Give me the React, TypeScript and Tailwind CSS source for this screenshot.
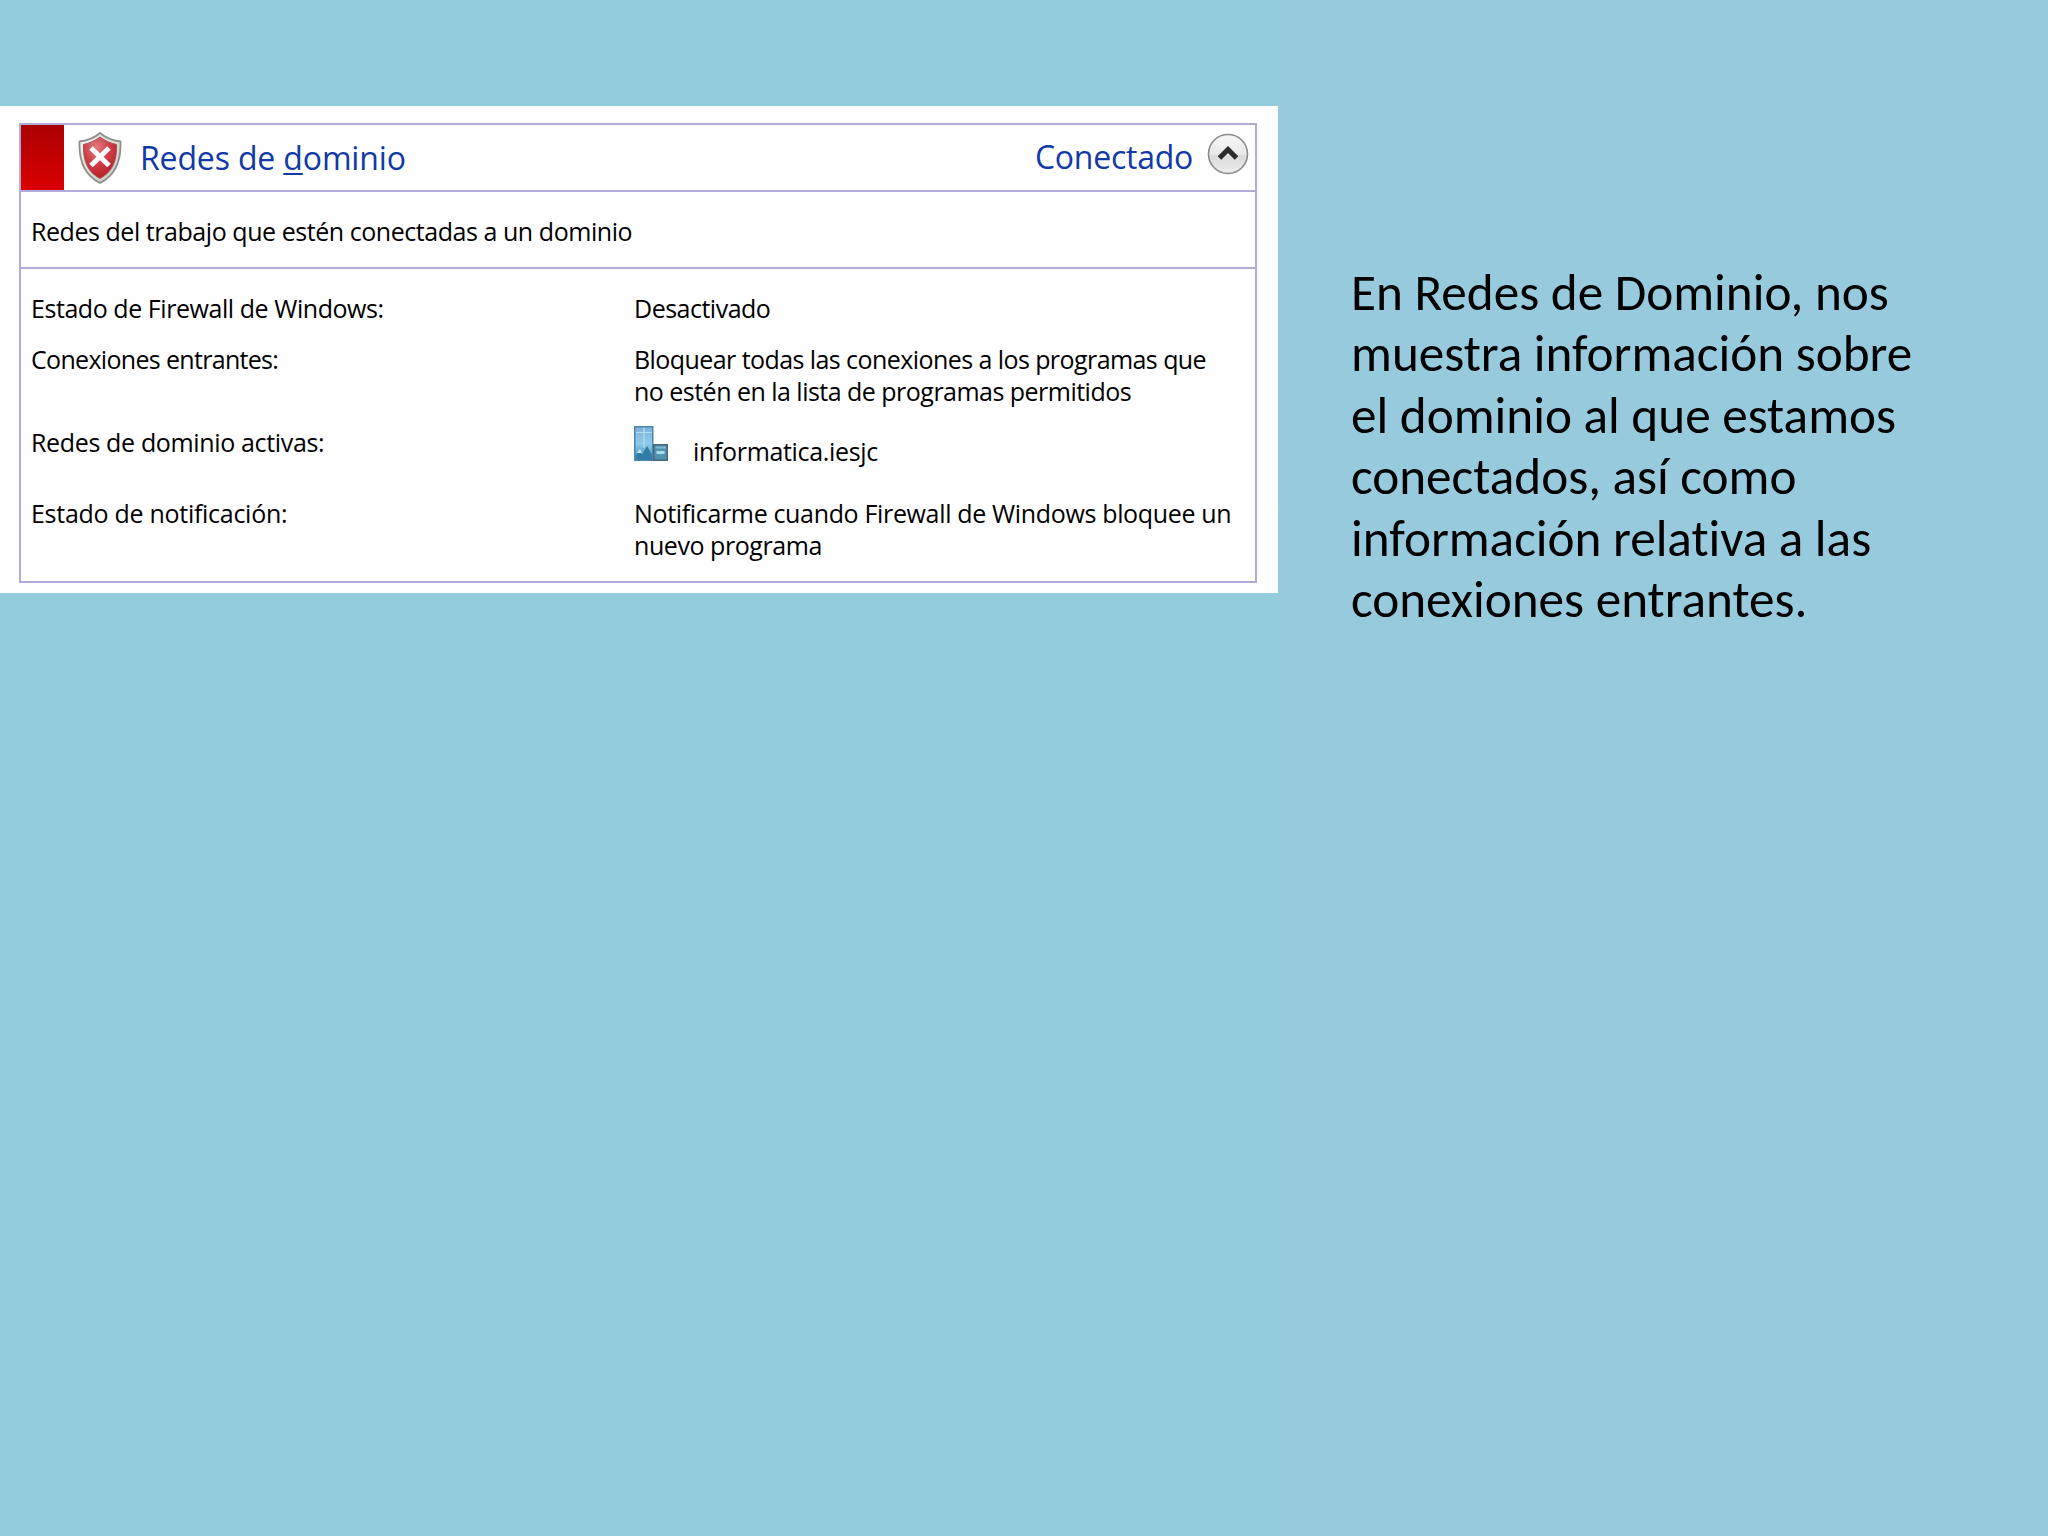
import type { ReactNode } from "react";

function ShieldIcon() {
  return (
    <svg viewBox="0 0 44 52" className="h-[52px] w-[44px]">
      <defs>
        <radialGradient id="shieldFill" cx="0.4" cy="0.25" r="0.85">
          <stop offset="0" stopColor="#e27a80" />
          <stop offset="0.45" stopColor="#cf4048" />
          <stop offset="1" stopColor="#b3141f" />
        </radialGradient>
        <linearGradient id="shieldRim" x1="0" y1="0" x2="1" y2="1">
          <stop offset="0" stopColor="#f6f6f2" />
          <stop offset="1" stopColor="#c4c4be" />
        </linearGradient>
      </defs>
      <path
        d="M22 1C17 5.500 9 8.500 1.500 9.500C0.800 27 5 42.500 22 51C39 42.500 43.200 27 42.500 9.500C35 8.500 27 5.500 22 1Z"
        fill="url(#shieldRim)"
        stroke="#8f8f8b"
        strokeWidth="1.800"
      />
      <path
        d="M22 5C17.500 8.500 11 11.500 5.500 12.500C5 27 8.500 39.500 22 46.500C35.500 39.500 39 27 38.500 12.500C33 11.500 26.500 8.500 22 5Z"
        fill="url(#shieldFill)"
        stroke="#a5525a"
        strokeWidth="1"
      />
      <path d="M13 16L31 33.500M31 16L13 33.500" stroke="#fff" strokeWidth="5" />
    </svg>
  );
}

function CollapseIcon() {
  return (
    <svg viewBox="0 0 42 42" className="h-[42px] w-[42px]">
      <defs>
        <linearGradient id="knob" x1="0" y1="0" x2="0" y2="1">
          <stop offset="0" stopColor="#f8f8f8" />
          <stop offset="0.5" stopColor="#e8e8e8" />
          <stop offset="0.55" stopColor="#dadada" />
          <stop offset="1" stopColor="#eeeeee" />
        </linearGradient>
      </defs>
      <circle cx="21" cy="21" r="19.500" fill="url(#knob)" stroke="#8a8a8a" strokeWidth="1.600" />
      <path d="M12.500 25L21 16.500L29.500 25" fill="none" stroke="#2b2b2b" strokeWidth="5" />
    </svg>
  );
}

function BuildingIcon() {
  return (
    <svg viewBox="0 0 34 35" className="h-[35px] w-[34px]">
      <defs>
        <linearGradient id="tower" x1="0" y1="0" x2="0" y2="1">
          <stop offset="0" stopColor="#7fb0d2" />
          <stop offset="0.5" stopColor="#8ccbec" />
          <stop offset="1" stopColor="#3d86ad" />
        </linearGradient>
      </defs>
      <rect x="0.750" y="0.750" width="18" height="33.500" fill="url(#tower)" stroke="#4a86ad" strokeWidth="1.500" />
      <path d="M2 6.500H18M10 1.500V22" stroke="#b4e0f5" strokeWidth="1.200" />
      <path d="M2 29L6 25L8 29L13 20L18 29V33.500H2Z" fill="#2f7da6" />
      <path d="M3 27L6 23L8 27Z" fill="#c4ecf8" />
      <rect x="19.750" y="18.750" width="13.500" height="15.500" fill="#4f93b3" stroke="#4a6678" strokeWidth="1.500" />
      <path d="M21.500 21.500H32" stroke="#7fb4cc" strokeWidth="2" />
      <rect x="22.500" y="25" width="8" height="3" fill="#a5dcec" />
    </svg>
  );
}

type RowProps = { label: string; labelClass: string; className?: string; children: ReactNode };

function Row({ label, labelClass, className = "", children }: RowProps) {
  return (
    <div className={`flex ${className}`}>
      <div className={`w-[603px] shrink-0 ${labelClass}`}>{label}</div>
      <div>{children}</div>
    </div>
  );
}

function FirewallPanel() {
  return (
    <section className="h-[487px] w-[1278px] shrink-0 bg-[#fefefe] pt-[17px] pl-[19px] font-['Open_Sans','Noto_Sans',sans-serif] whitespace-nowrap text-black">
      <div className="h-[460px] w-[1238px] border-2 border-[#b0abdb]">
        <header className="flex h-[67px] border-b-2 border-[#b0abdb] text-[32px] leading-[44px] text-[#1239a6]">
          <div className="w-[43px] bg-linear-to-b from-[#ab0000] to-[#dc0000]" />
          <div className="pt-[7px] pl-[14px]">
            <ShieldIcon />
          </div>
          <h1 className="pt-[11px] pl-[18px] tracking-[-0.150px]">
            Redes de <span className="underline decoration-2 underline-offset-[3px]">d</span>ominio
          </h1>
          <div className="ml-auto pt-[10px] tracking-[-0.250px]">Conectado</div>
          <div className="pt-[8px] pr-[6px] pl-[14px]">
            <CollapseIcon />
          </div>
        </header>

        <p className="h-[77px] border-b-2 border-[#b0abdb] pt-[23px] pl-[10px] text-[25px] leading-[32px] tracking-[-0.450px]">
          Redes del trabajo que estén conectadas a un dominio
        </p>

        <div className="flex flex-col gap-[19px] pt-[23px] pl-[10px] text-[25px] leading-[32px]">
          <Row label="Estado de Firewall de Windows:" labelClass="tracking-[-0.440px]">
            <p className="tracking-[-0.500px]">Desactivado</p>
          </Row>
          <Row label="Conexiones entrantes:" labelClass="tracking-[-0.680px]">
            <p className="tracking-[-0.570px]">Bloquear todas las conexiones a los programas que</p>
            <p className="tracking-[-0.520px]">no estén en la lista de programas permitidos</p>
          </Row>
          <Row label="Redes de dominio activas:" labelClass="tracking-[-0.350px]" className="h-[52px]">
            <div className="flex">
              <BuildingIcon />
              <p className="pt-[9px] pl-[25px] tracking-[-0.330px]">informatica.iesjc</p>
            </div>
          </Row>
          <Row label="Estado de notificación:" labelClass="tracking-[-0.280px]">
            <p className="tracking-[-0.340px]">Notificarme cuando Firewall de Windows bloquee un</p>
            <p className="tracking-[-0.440px]">nuevo programa</p>
          </Row>
        </div>
      </div>
    </section>
  );
}

export default function App() {
  return (
    <main className="flex h-[1536px] w-[2048px] items-start overflow-hidden bg-linear-to-r from-[#93cddd] from-62% to-[#97cadd] to-64% pt-[106px]">
      <FirewallPanel />
      <p className="pt-[156px] pl-[73px] font-['Carlito','Calibri','Lato',sans-serif] text-[51.200px] leading-[61.440px] whitespace-nowrap text-black [font-variant-ligatures:none]">
        En Redes de Dominio, nos
        <br />
        muestra información sobre
        <br />
        el dominio al que estamos
        <br />
        conectados, así como
        <br />
        información relativa a las
        <br />
        conexiones entrantes.
      </p>
    </main>
  );
}
